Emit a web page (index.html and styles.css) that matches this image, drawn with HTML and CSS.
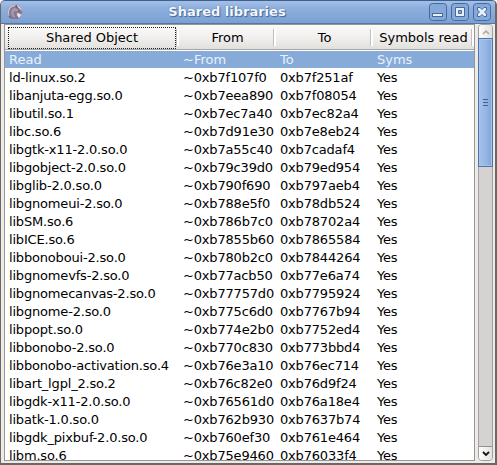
FILE: index.html
```
<!DOCTYPE html>
<html lang="en">
<head>
<meta charset="utf-8">
<title>Shared libraries</title>
<link rel="stylesheet" href="styles.css">
</head>
<body>
<div class="window">
  <header class="titlebar">
    <svg class="app-icon" width="16" height="16" viewBox="0 0 16 16">
      <circle cx="8" cy="8" r="7.2" fill="#e3dcec" stroke="#a497b0" stroke-width=".8"/>
      <path d="M2 9C2 5 4 2.500 7 2.500L9.500 .3L10.500 3C13 4.500 14 6 15.500 8.500L14 10.500L11.500 9L9.500 9.500L11 12L12 15L5 15C3 13.500 2 12 2 9Z" fill="#85788f"/>
      <path d="M4 9C4 6 6 4 8 4L12 6L10 7.500L7 7L6.500 10L8.500 13.500L5.500 13Z" fill="#a79aae"/>
      <path d="M9.500 2L10.500 4.500M11 6.500L12.500 7M2 12L4 14.500" stroke="#5b5066" stroke-width="1"/>
      <path d="M10 10.500L13 11L12 13.500L11 12.500Z" fill="#f1eef5"/>
    </svg>
    <h1 class="title">Shared libraries</h1>
    <div class="controls">
      <svg class="control" width="18" height="18" viewBox="0 0 18 18"><rect class="frame" x=".5" y=".5" width="17" height="17" rx="3"/><rect class="glyph" x="3.500" y="10.500" width="10" height="3"/></svg>
      <svg class="control" width="18" height="18" viewBox="0 0 18 18"><rect class="frame" x=".5" y=".5" width="17" height="17" rx="3"/><path class="glyph" fill-rule="evenodd" d="M4.500 4.500H13.500V13.500H4.500ZM7.500 7.500V10.500H10.500V7.500Z"/></svg>
      <svg class="control" width="18" height="18" viewBox="0 0 18 18"><rect class="frame" x=".5" y=".5" width="17" height="17" rx="3"/><path class="glyph" d="M4.500 4.500H7L9 6.500L11 4.500H13.500V7L11.500 9L13.500 11V13.500H11L9 11.500L7 13.500H4.500V11L6.500 9L4.500 7Z"/></svg>
    </div>
  </header>
  <main class="content">
    <section class="list">
      <div class="columns">
        <div class="column focused"><span>Shared Object</span></div>
        <div class="column"><span>From</span></div>
        <div class="column"><span>To</span></div>
        <div class="column"><span>Symbols read</span></div>
      </div>
      <div class="rows">
        <div class="row selected"><span>Read</span><span>~From</span><span>To</span><span>Syms</span></div>
        <div class="row"><span>ld-linux.so.2</span><span>~0xb7f107f0</span><span>0xb7f251af</span><span>Yes</span></div>
        <div class="row"><span>libanjuta-egg.so.0</span><span>~0xb7eea890</span><span>0xb7f08054</span><span>Yes</span></div>
        <div class="row"><span>libutil.so.1</span><span>~0xb7ec7a40</span><span>0xb7ec82a4</span><span>Yes</span></div>
        <div class="row"><span>libc.so.6</span><span>~0xb7d91e30</span><span>0xb7e8eb24</span><span>Yes</span></div>
        <div class="row"><span>libgtk-x11-2.0.so.0</span><span>~0xb7a55c40</span><span>0xb7cadaf4</span><span>Yes</span></div>
        <div class="row"><span>libgobject-2.0.so.0</span><span>~0xb79c39d0</span><span>0xb79ed954</span><span>Yes</span></div>
        <div class="row"><span>libglib-2.0.so.0</span><span>~0xb790f690</span><span>0xb797aeb4</span><span>Yes</span></div>
        <div class="row"><span>libgnomeui-2.so.0</span><span>~0xb788e5f0</span><span>0xb78db524</span><span>Yes</span></div>
        <div class="row"><span>libSM.so.6</span><span>~0xb786b7c0</span><span>0xb78702a4</span><span>Yes</span></div>
        <div class="row"><span>libICE.so.6</span><span>~0xb7855b60</span><span>0xb7865584</span><span>Yes</span></div>
        <div class="row"><span>libbonoboui-2.so.0</span><span>~0xb780b2c0</span><span>0xb7844264</span><span>Yes</span></div>
        <div class="row"><span>libgnomevfs-2.so.0</span><span>~0xb77acb50</span><span>0xb77e6a74</span><span>Yes</span></div>
        <div class="row"><span>libgnomecanvas-2.so.0</span><span>~0xb77757d0</span><span>0xb7795924</span><span>Yes</span></div>
        <div class="row"><span>libgnome-2.so.0</span><span>~0xb775c6d0</span><span>0xb7767b94</span><span>Yes</span></div>
        <div class="row"><span>libpopt.so.0</span><span>~0xb774e2b0</span><span>0xb7752ed4</span><span>Yes</span></div>
        <div class="row"><span>libbonobo-2.so.0</span><span>~0xb770c830</span><span>0xb773bbd4</span><span>Yes</span></div>
        <div class="row"><span>libbonobo-activation.so.4</span><span>~0xb76e3a10</span><span>0xb76ec714</span><span>Yes</span></div>
        <div class="row"><span>libart_lgpl_2.so.2</span><span>~0xb76c82e0</span><span>0xb76d9f24</span><span>Yes</span></div>
        <div class="row"><span>libgdk-x11-2.0.so.0</span><span>~0xb76561d0</span><span>0xb76a18e4</span><span>Yes</span></div>
        <div class="row"><span>libatk-1.0.so.0</span><span>~0xb762b930</span><span>0xb7637b74</span><span>Yes</span></div>
        <div class="row"><span>libgdk_pixbuf-2.0.so.0</span><span>~0xb760ef30</span><span>0xb761e464</span><span>Yes</span></div>
        <div class="row"><span>libm.so.6</span><span>~0xb75e9460</span><span>0xb76033f4</span><span>Yes</span></div>
      </div>
    </section>
    <div class="scrollbar">
      <div class="step up"><svg width="8" height="6" viewBox="0 0 8 6"><path d="M1 5L4 2L7 5" fill="none" stroke="#aaa8a5" stroke-width="1.5"/></svg></div>
      <div class="thumb"><i></i><i></i><i></i></div>
      <div class="step down"><svg width="8" height="6" viewBox="0 0 8 6"><path d="M1 1L4 4L7 1" fill="none" stroke="#161616" stroke-width="1.8"/></svg></div>
    </div>
  </main>
</div>
</body>
</html>
```
FILE: styles.css
```
* { box-sizing: border-box; }
body {
  margin: 0;
  overflow: hidden;
  background: #fff;
  font: 13px/18px "DejaVu Sans", sans-serif;
  color: #000;
}
.window {
  display: flex;
  flex-direction: column;
  width: 497px;
  height: 465px;
  border: 1px solid #6b6764;
  border-right-width: 2px;
  border-bottom-width: 2px;
  border-top: 0;
  border-radius: 5px 5px 0 0;
  background: #edebe9;
  overflow: hidden;
}
.titlebar {
  display: flex;
  align-items: center;
  flex: none;
  height: 24px;
  margin: 0 -2px 0 -1px;
  padding: 0 5px 0 6px;
  border: 1px solid #3f5f8d;
  border-bottom-color: #5877a3;
  border-radius: 5px 5px 0 0;
  background: linear-gradient(#a3c0e8, #8fb0de 30%, #7aa0d3);
}
.app-icon { flex: none; }
.title {
  flex: 1;
  margin: 0;
  padding-left: 2px;
  text-align: center;
  font-size: 13px;
  line-height: 22px;
  color: #f3f7fd;
  text-shadow: 1px 1px 1px #426798, 0 0 1px #426798;
}
.controls { display: flex; gap: 4px; }
.control { display: block; }
.frame { fill: #84a8da; stroke: #466a9d; }
.glyph { fill: #e7effa; stroke: #466a9d; }
.content {
  display: flex;
  flex: 1;
  min-height: 0;
  padding: 0 2px 2px 3px;
  gap: 3px;
}
.list {
  display: flex;
  flex-direction: column;
  width: 471px;
  border: 1px solid #989694;
  background: #fff;
}
.columns, .row { display: grid; grid-template-columns: 174px 97px 97px 101px; }
.columns {
  flex: none;
  height: 25px;
  margin-bottom: 1px;
  border-bottom: 1px solid #a9a49f;
  background: linear-gradient(#fafaf9, #f0efed 55%, #e2e0dd);
}
.column {
  position: relative;
  display: flex;
  justify-content: center;
  line-height: 25px;
}
.column::after {
  content: "";
  position: absolute;
  right: 0;
  top: 4px;
  height: 17px;
  width: 2px;
  border-left: 1px solid #c2bfbc;
  background: #fff;
}
.focused::before {
  content: "";
  position: absolute;
  inset: 2px 3px 1px 3px;
  border: 1px dotted #222;
}
.rows { flex: 1; min-height: 0; overflow: hidden; }
.row {
  height: 18px;
  padding-left: 4px;
  line-height: 18px;
  letter-spacing: -0.18px;
  white-space: nowrap;
}
.row.selected {
  height: 17px;
  margin-bottom: 1px;
  color: #eaf1fb;
  background: #86abd9;
  letter-spacing: 0;
}
.scrollbar {
  display: flex;
  flex-direction: column;
  width: 15px;
  border: 1px solid #a19e9b;
  border-radius: 4px;
  background: #d5d3d1;
}
.step {
  display: flex;
  align-items: center;
  justify-content: center;
  flex: none;
  height: 13px;
  background: linear-gradient(90deg, #fdfdfd, #e4e2e0);
}
.up { border-radius: 3px 3px 0 0; }
.down { height: 14px; margin-top: auto; border-top: 1px solid #94918e; border-radius: 0 0 3px 3px; }
.thumb {
  display: flex;
  flex-direction: column;
  align-items: center;
  justify-content: center;
  gap: 2px;
  flex: none;
  height: 129px;
  margin: 0 -1px;
  border: 1px solid #4f74a7;
  background: linear-gradient(90deg, #a4c2ea, #95b7e4 50%, #7fa4d6);
  box-shadow: inset 0 0 0 1px #a8c4ea;
}
.thumb i { width: 5px; height: 1px; background: #40608e; }
```
